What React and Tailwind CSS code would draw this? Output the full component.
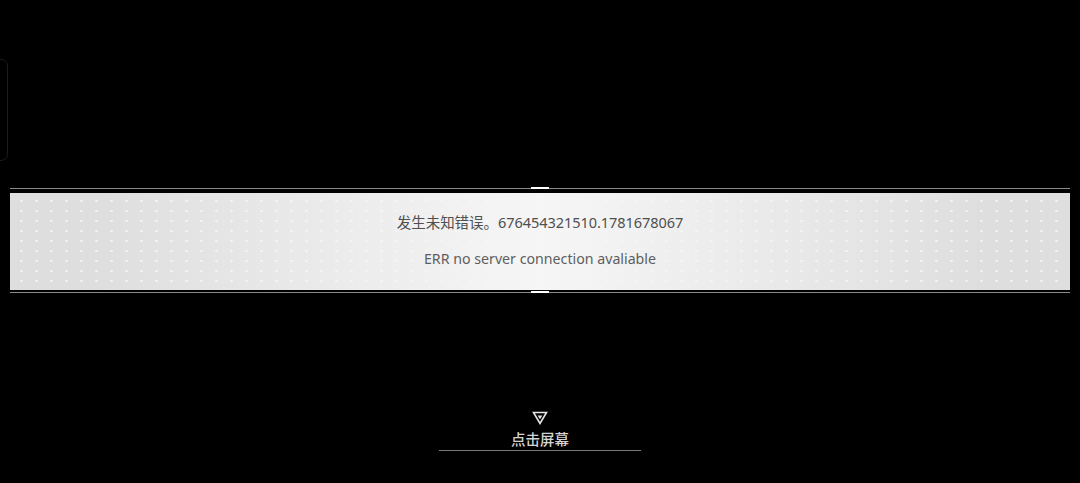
import React from "react";

const TapIcon = () => (
  <svg width="16" height="14" viewBox="0 0 16 14" fill="none">
    <path d="M1.5 1.5 H14.5 L8 12.5 Z" stroke="#e5e5e5" strokeWidth="1.6" strokeLinejoin="miter" />
    <path d="M5.6 4.6 H10.4 L8 8.2 Z" fill="#e5e5e5" />
  </svg>
);

const App = () => {
  return (
    <div
      className="relative w-[1080px] h-[483px] overflow-hidden bg-black flex flex-col"
      style={{ fontFamily: '"Noto Sans", "Noto Sans CJK SC", sans-serif' }}
    >
      {/* side panel edge, top left */}
      <div className="absolute -left-[30px] top-[59px] w-[38px] h-[102px] rounded-[7px] border border-[#1c1c1c]" />

      {/* error banner */}
      <div className="pt-[188px] px-[10px]">
        <div className="relative h-px bg-[#8a8a8a]">
          <div className="absolute left-[521px] -top-[1px] w-[18px] h-[2px] bg-white" />
        </div>
        <div className="mt-[4px] h-[97px] bg-[#dedede] bg-[radial-gradient(circle,rgba(255,255,255,0.6)_1px,transparent_1.5px)] bg-[length:15px_10px] bg-[position:4px_3px]">
          <div className="h-full flex flex-col items-center pt-[19px] bg-gradient-to-r from-[#dcdcdc]/0 from-[8%] via-[#f6f6f6] to-[#dcdcdc]/0 to-[92%]">
            <div className="text-[14.5px] leading-[20px] text-[#4f4f4f] tracking-[-0.05px]">
              发生未知错误。676454321510.1781678067
            </div>
            <div className="mt-[17px] text-[14.2px] leading-[20px] text-[#5e5e5e]">
              ERR no server connection avaliable
            </div>
          </div>
        </div>
        <div className="relative mt-[2px] h-px bg-[#8a8a8a]">
          <div className="absolute left-[521px] -top-[1px] w-[18px] h-[2px] bg-white" />
        </div>
      </div>

      {/* tap prompt */}
      <div className="mt-[118px] flex flex-col items-center">
        <TapIcon />
        <div className="mt-[5px] text-[14.5px] leading-[18px] font-medium text-[#d4d4d4]">点击屏幕</div>
        <div className="mt-[2px] w-[202px] h-px bg-[#7a7a7a]" />
      </div>
    </div>
  );
};

export default App;
